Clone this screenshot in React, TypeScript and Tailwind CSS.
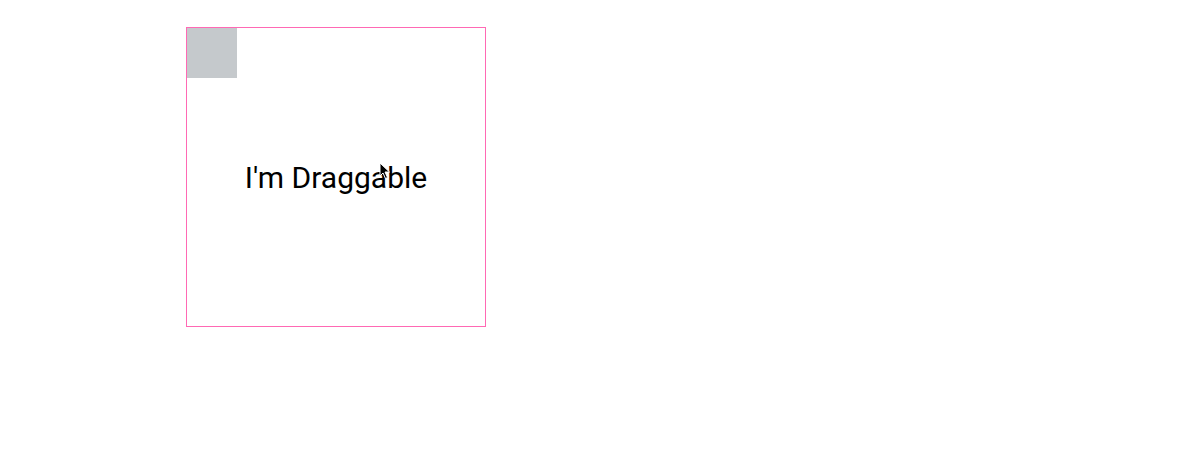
import React from "react";

export default function App() {
  return (
    <div className="w-[1195px] h-[453px] bg-white pt-[27px] pl-[186px]" style={{ fontFamily: "Roboto, sans-serif" }}>
      <div className="relative w-[300px] h-[300px] border border-[#ff69b4] flex items-center justify-center">
        <div className="absolute left-0 top-0 w-[50px] h-[50px] bg-[#c5c9cc]" />
        <span className="text-[30px] leading-none text-black pt-[2px]">I'm Draggable</span>
        <svg className="absolute left-[192px] top-[134px]" width="12" height="18" viewBox="0 0 12 18">
          <path d="M1 1 L1 14 L4 11 L6.5 16.5 L8.5 15.5 L6 10 L10.5 10 Z" fill="#000" stroke="#fff" strokeWidth="1" />
        </svg>
      </div>
    </div>
  );
}
